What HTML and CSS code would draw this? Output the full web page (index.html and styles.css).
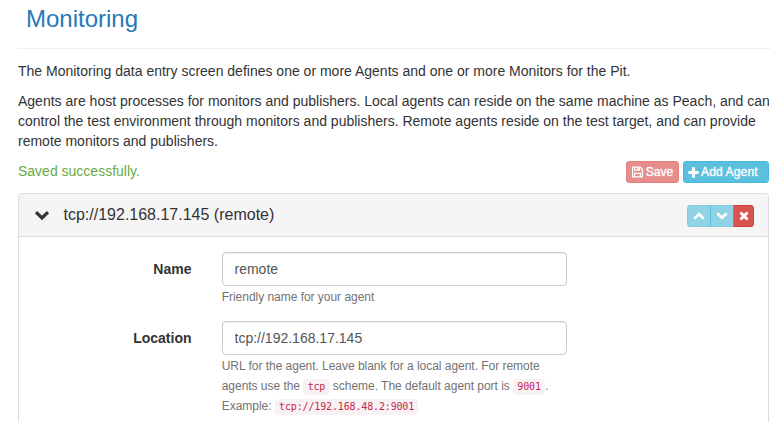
FILE: index.html
```html
<!DOCTYPE html>
<html lang="en">
<head>
<meta charset="utf-8">
<title>Monitoring</title>
<link rel="stylesheet" href="styles.css">
</head>
<body>
<main class="page">
  <header class="page-header"><h1>Monitoring</h1></header>
  <p>The Monitoring data entry screen defines one or more Agents and one or more Monitors for the Pit.</p>
  <p class="intro">Agents are host processes for monitors and publishers. Local agents can reside on the same machine as Peach, and can<br>control the test environment through monitors and publishers. Remote agents reside on the test target, and can provide<br>remote monitors and publishers.</p>
  <div class="toolbar">
    <span class="status">Saved successfully.</span>
    <div class="actions">
      <button class="btn btn-danger disabled save"><svg width="11" height="12" viewBox="0 0 11 12" fill="none" stroke="#fff" stroke-width="1.2"><path d="M.6 1.1h7.6l2.2 2.2v7.6H.6z"/><path d="M2.6 10.9V7.3h5.8v3.6M2.6 1.1v3.1h5V1.1"/><path d="M6 1.4v2.3" stroke-width="1.5"/></svg><span>Save</span></button>
      <button class="btn btn-info add"><svg width="11" height="11" viewBox="0 0 10 10" fill="#fff"><path d="M3.6.3h2.8v3.3h3.3v2.8H6.4v3.3H3.6V6.4H.3V3.6h3.3z"/></svg><span>Add Agent</span></button>
    </div>
  </div>
  <section class="panel">
    <div class="panel-heading">
      <svg class="toggle" width="16" height="12" viewBox="0 0 16 12" fill="none" stroke="#333" stroke-width="3.2"><path d="M2 2.2l6 5.8 6-5.8"/></svg>
      <h2>tcp://192.168.17.145 (remote)</h2>
      <div class="group">
        <button class="btn btn-info disabled" aria-label="Move up"><svg width="12" height="10" viewBox="0 0 12 10" fill="none" stroke="#fff" stroke-width="2.8"><path d="M1.2 7.7L6 3.2l4.8 4.5"/></svg></button>
        <button class="btn btn-info disabled" aria-label="Move down"><svg width="12" height="10" viewBox="0 0 12 10" fill="none" stroke="#fff" stroke-width="2.8"><path d="M1.2 2.3L6 6.8l4.8-4.5"/></svg></button>
        <button class="btn btn-danger" aria-label="Remove"><svg width="10" height="10" viewBox="0 0 10 10" fill="none" stroke="#fff" stroke-width="2.9"><path d="M1.5 1.5l7 7M8.5 1.5l-7 7"/></svg></button>
      </div>
    </div>
    <form class="panel-body">
      <div class="row">
        <label for="name">Name</label>
        <div class="field">
          <input id="name" type="text" value="remote">
          <div class="help">Friendly name for your agent</div>
        </div>
      </div>
      <div class="row">
        <label for="location">Location</label>
        <div class="field">
          <input id="location" type="text" value="tcp://192.168.17.145">
          <div class="help">URL for the agent. Leave blank for a local agent. For remote<br>agents use the <code>tcp</code> scheme. The default agent port is <code>9001</code>.<br>Example: <code>tcp://192.168.48.2:9001</code></div>
        </div>
      </div>
    </form>
  </section>
</main>
</body>
</html>
```
FILE: styles.css
```css
* { box-sizing: border-box; }
html, body { height: 100%; overflow: hidden; }
body {
  margin: 0;
  background: #fff;
  color: #333;
  font: 14px/20px "Liberation Sans", Arial, sans-serif;
}
.page { padding-left: 18px; }
.page-header {
  height: 49px;
  margin-bottom: 12px;
  padding: 5px 8px 0;
  border-bottom: 1px dotted #ddd;
}
h1 {
  margin: 0;
  color: #2679b5;
  font-size: 24px;
  font-weight: 400;
  line-height: 28px;
}
p { margin: 0 0 10px; white-space: nowrap; }
.toolbar {
  display: flex;
  justify-content: space-between;
  height: 32px;
}
.status { color: #69aa46; }
.actions { display: flex; gap: 4px; }
.btn {
  display: flex;
  align-items: center;
  justify-content: center;
  height: 22px;
  padding: 0 4px;
  border: 1px solid;
  border-radius: 3px;
  color: #fff;
  font: 12px/18px "Liberation Sans", Arial, sans-serif;
  white-space: nowrap;
}
.btn span { -webkit-text-stroke: .35px #fff; }
.save { width: 53px; gap: 3px; }
.add { width: 86px; gap: 2px; justify-content: flex-start; letter-spacing: .15px; }
.btn-info { background: #5bc0de; border-color: #46b8da; }
.btn-danger { background: #d9534f; border-color: #d43f3a; }
.disabled { opacity: .65; }
.panel {
  height: 229px;
  border: 1px solid #ddd;
  border-bottom: 0;
  border-radius: 4px 4px 0 0;
  overflow: hidden;
}
.panel-heading {
  display: flex;
  align-items: center;
  height: 43px;
  padding: 0 14px 0 15px;
  border-bottom: 1px solid #ddd;
  background: #f5f5f5;
}
h2 {
  flex: 1;
  margin: 0 0 0 13.5px;
  font-size: 16px;
  font-weight: 400;
}
.toggle { margin-top: 2px; }
.group { display: flex; margin-top: 1px; }
.group .btn { width: 24px; border-radius: 0; margin-left: -1px; }
.group .btn:first-child { margin-left: 0; border-radius: 3px 0 0 3px; }
.group .btn:last-child { width: 21px; border-radius: 0 3px 3px 0; }
.panel-body { padding-top: 15px; }
.row { display: flex; height: 69px; }
label {
  width: 172.5px;
  padding-top: 7px;
  font-weight: 700;
  text-align: right;
}
.field { width: 345px; margin-left: 30.5px; }
input {
  display: block;
  width: 345px;
  height: 34px;
  padding: 6px 11.5px;
  border: 1px solid #ccc;
  border-radius: 4px;
  box-shadow: inset 0 1px 1px rgba(0, 0, 0, .075);
  color: #555;
  font: 14px/20px "Liberation Sans", Arial, sans-serif;
}
.help {
  margin: 1px 0 0 -.3px;
  color: #737373;
  font-size: 12px;
  letter-spacing: -.03px;
  white-space: nowrap;
}
code {
  padding: 2px 4.3px 3px;
  border-radius: 4px;
  background: #f9f2f4;
  color: #c7254e;
  font: 10px/14px "DejaVu Sans Mono", Consolas, monospace;
  letter-spacing: -.15px;
}
```
